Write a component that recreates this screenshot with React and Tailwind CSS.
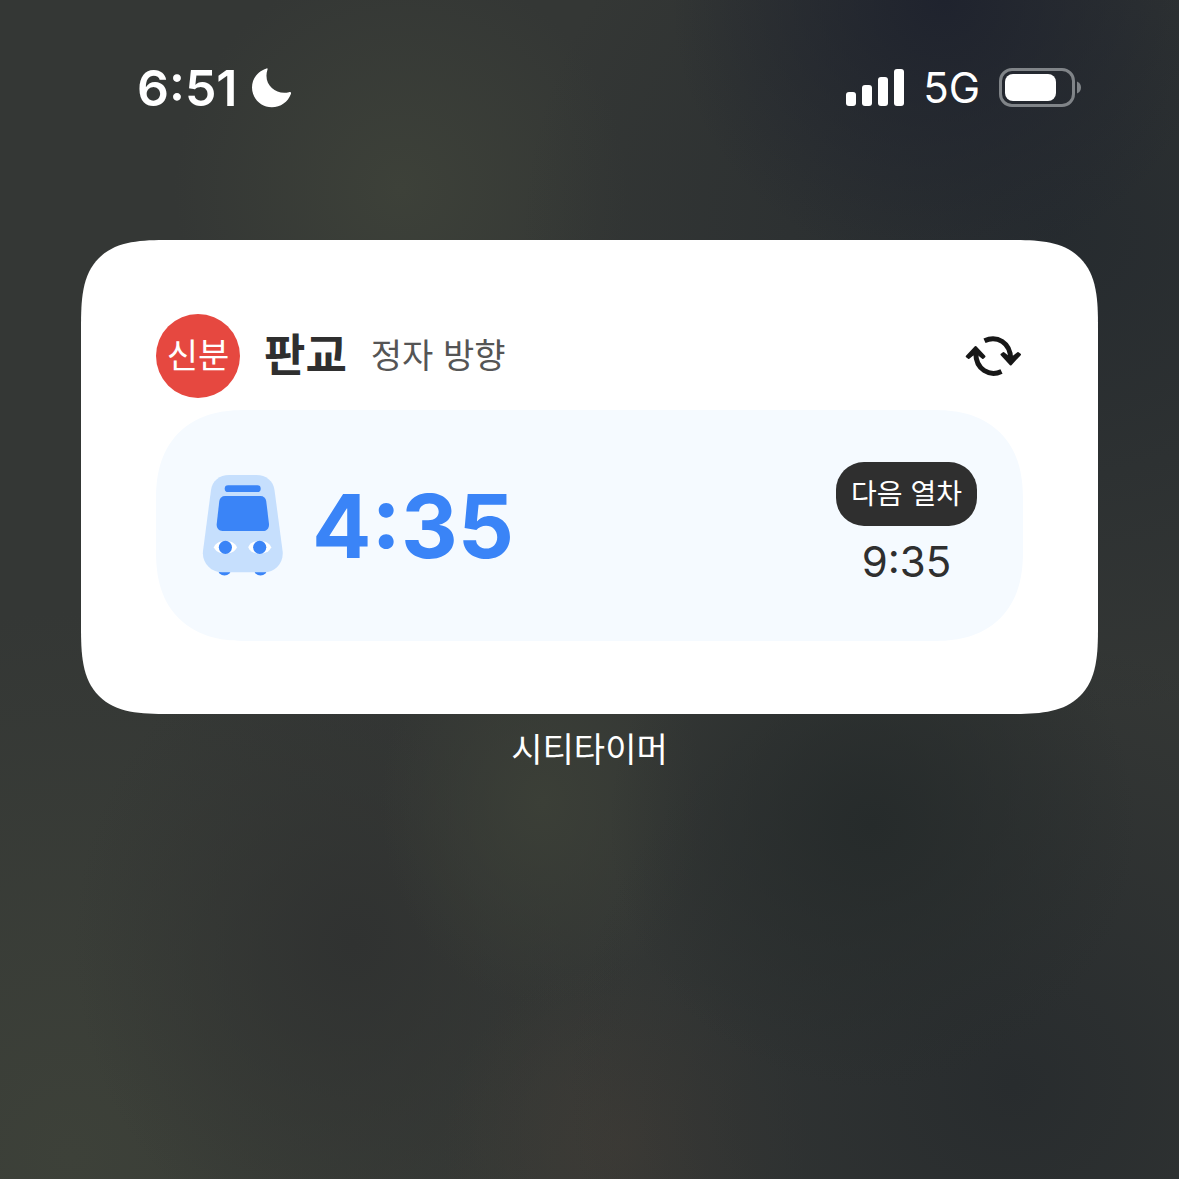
import React, { useState } from 'react'

const MoonIcon = () => (
  <svg width="40" height="40" viewBox="0 0 40 40" fill="currentColor" aria-hidden="true">
    <path d="M14.6 .4C5.8 3 0 10.600 0 19.500C0 30.300 8.800 39.200 19.800 39.200C28.600 39.200 36 34 38.900 26C39.400 24.500 38.600 23.800 37 24.200C24.500 27.600 10.500 17 15.500 1.600C15.800 .6 15.500 .1 14.600 .4Z" />
  </svg>
)

const SignalIcon = () => (
  <svg width="58" height="38" viewBox="0 0 58 38" fill="currentColor" aria-hidden="true">
    <rect x="0" y="23" width="10" height="14" rx="3" />
    <rect x="16" y="16" width="10" height="21" rx="3" />
    <rect x="32" y="8" width="10" height="29" rx="3" />
    <rect x="48" y="0" width="10" height="37" rx="3" />
  </svg>
)

const BatteryIcon = () => (
  <svg width="82" height="40" viewBox="0 0 82 40" fill="none" aria-hidden="true">
    <rect x="1.500" y="1.500" width="73" height="36" rx="11.500" stroke="#808488" strokeWidth="3" />
    <rect x="6" y="6" width="51" height="27" rx="8" fill="white" />
    <path d="M78 13.500C80.500 14.500 82 16.800 82 19.500C82 22.200 80.500 24.500 78 25.500Z" fill="#808488" />
  </svg>
)

const RefreshIcon = () => (
  <svg width="58" height="48" viewBox="0 0 58 48" fill="none" stroke="#171717" strokeWidth="5" aria-hidden="true">
    <path d="M19.500 8.700C32 3 45.600 10.500 45.600 27" />
    <path d="M36.500 39.500C24.500 45 10.800 37.500 10.800 21" />
    <path d="M36.500 22.500L38.500 21L43 24.500H48.500L53 21L55 22.500L45.700 32.500Z" fill="#171717" strokeWidth="2" strokeLinejoin="round" />
    <path d="M1.700 24.500L3.700 26L8 22.500H13.500L17.800 26L19.500 24.500L10.600 15Z" fill="#171717" strokeWidth="2" strokeLinejoin="round" />
  </svg>
)

const TrainIcon = () => (
  <svg width="82" height="102" viewBox="0 0 82 102" fill="none" aria-hidden="true">
    <circle cx="22.500" cy="93.500" r="7" fill="#3a84f7" />
    <circle cx="58.500" cy="93.500" r="7" fill="#3a84f7" />
    <path
      d="M27 0H54.500C64 0 71.300 6 72.500 15L80.600 76C82 88 73 97.300 62 97.300H20C9 97.300 -.3 88 1 76L9 15C10.200 6 17.500 0 27 0Z"
      fill="#c6dffd"
    />
    <rect x="22.700" y="10.300" width="36" height="6.700" rx="3.350" fill="#3a84f7" />
    <path
      d="M23 21H58.500C61.500 21 63.800 23 64.200 26L67 49C67.300 53 64.800 56 61 56H20.500C16.800 56 14.300 53 14.700 49L17.300 26C17.700 23 20 21 23 21Z"
      fill="#3a84f7"
    />
    <path d="M11.900 72.300C13.500 68 18 66 23.400 66S33.300 68 34.900 72.300C33.300 76.600 28.800 78.600 23.400 78.600S13.500 76.600 11.900 72.300Z" fill="white" />
    <path d="M46.200 72.300C47.800 68 52.300 66 57.700 66S67.600 68 69.200 72.300C67.600 76.600 63.100 78.600 57.700 78.600S47.800 76.600 46.200 72.300Z" fill="white" />
    <circle cx="23.400" cy="72.300" r="6.600" fill="#3a84f7" />
    <circle cx="57.700" cy="72.300" r="6.600" fill="#3a84f7" />
  </svg>
)

const StatusBar = () => (
  <header className="flex items-center justify-between pt-14 pr-[98px] pl-[137px] text-white">
    <div className="flex items-center gap-[14px]">
      <time className="text-[50px] leading-[64px] font-semibold">6:51</time>
      <MoonIcon />
    </div>
    <div className="flex items-center gap-[19px]">
      <SignalIcon />
      <span className="text-[42px] leading-[64px]">5G</span>
      <BatteryIcon />
    </div>
  </header>
)

/**
 * Home screen widget with the countdown to the next two trains
 * @param {string} line - Short line name shown in the round badge
 * @param {string} station - Station name
 * @param {string} direction - Direction of travel
 * @param {string} current - Time left until the first train
 * @param {string} next - Time left until the train after it
 */
const TimerWidget = ({ line, station, direction, current, next, onRefresh }) => (
  <section className="rounded-[66px] bg-white px-[75px] pt-[74px] pb-[73px] supports-[corner-shape:squircle]:rounded-[88px] supports-[corner-shape:squircle]:[corner-shape:superellipse(1.6)]">
    <div className="mb-3 flex items-center gap-6">
      <span className="flex size-[84px] shrink-0 items-center justify-center rounded-full bg-[#e64840] text-[34px] leading-[48px] text-white">
        {line}
      </span>
      <h1 className="text-[45px] leading-[64px] font-bold text-[#2f2f2f]">{station}</h1>
      <span className="text-[34px] leading-[48px] text-[#555555]">{direction}</span>
      <button type="button" aria-label="새로고침" onClick={onRefresh} className="ml-auto cursor-pointer">
        <RefreshIcon />
      </button>
    </div>

    <div className="flex items-center justify-between rounded-[80px] bg-[#f5faff] px-[46px] pt-[52px] pb-[51px] supports-[corner-shape:squircle]:rounded-[90px] supports-[corner-shape:squircle]:[corner-shape:superellipse(1.25)]">
      <div className="flex items-center gap-7">
        <TrainIcon />
        <span className="text-[88px] leading-[96px] font-bold text-[#3a84f7]">{current}</span>
      </div>
      <div className="flex flex-col items-center gap-2">
        <span className="rounded-[28px] bg-[#2f2f2f] px-[15px] py-2 text-[28px] leading-[48px] text-white">다음 열차</span>
        <span className="text-[42px] leading-[56px] text-[#2f2f2f]">{next}</span>
      </div>
    </div>
  </section>
)

const App = () => {
  const [, setRefreshedAt] = useState(null)

  return (
    <div className="min-h-screen bg-[#343735] bg-[radial-gradient(circle_at_80%_0%,#1f232e_0%,transparent_18%),radial-gradient(ellipse_at_90%_20%,#262b2f_0%,transparent_36%),radial-gradient(circle_at_74%_70%,#262b2b_0%,transparent_22%),radial-gradient(circle_at_86%_92%,#282c2e_0%,transparent_30%),radial-gradient(circle_at_34%_16%,#3d4139_0%,transparent_18%),radial-gradient(ellipse_at_46%_68%,#3b3f37_0%,transparent_18%),radial-gradient(circle_at_53%_97%,#3d3b36_0%,transparent_14%),radial-gradient(ellipse_at_30%_80%,#303231_0%,transparent_24%),radial-gradient(circle_at_6%_98%,#3d4139_0%,transparent_34%)] font-['Inter','Noto_Sans_CJK_KR',sans-serif]">
      <StatusBar />
      <main className="px-[81px] pt-[120px]">
        <TimerWidget
          line="신분"
          station="판교"
          direction="정자 방향"
          current="4:35"
          next="9:35"
          onRefresh={() => setRefreshedAt(Date.now())}
        />
        <p className="mt-3 text-center text-[34px] leading-[48px] text-white">시티타이머</p>
      </main>
    </div>
  )
}

export default App
